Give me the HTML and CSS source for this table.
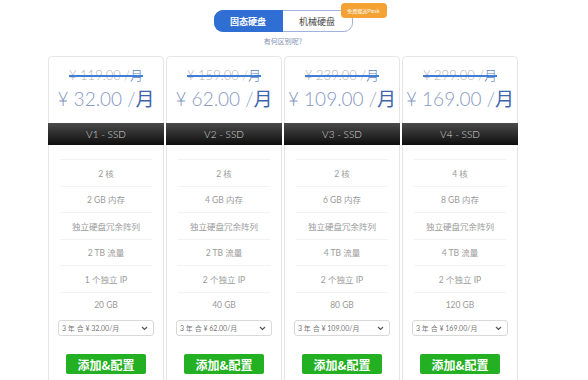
FILE: index.html
```html
<!DOCTYPE html>
<html lang="zh">
<head>
<meta charset="utf-8">
<link rel="stylesheet" href="styles.css">
</head>
<body>
<div class="wrap">
  <div class="toggle-row">
    <div class="toggle">
      <div class="opt active">固态硬盘</div>
      <div class="opt">机械硬盘</div>
      <div class="badge">免费赠送Plesk</div>
    </div>
  </div>
  <div class="sub">有何区别呢?</div>
  <div class="cards">
    <div class="card">
      <div class="prices">
        <div class="old">¥ 119.00 /<span class="m">月</span></div>
        <div class="now">¥ 32.00 /<span class="per">月</span></div>
      </div>
      <div class="bar">V1 - SSD</div>
      <ul class="feats">
        <li>2 核</li><li>2 GB 内存</li><li>独立硬盘冗余阵列</li><li>2 TB 流量</li><li>1 个独立 IP</li><li>20 GB</li>
      </ul>
      <div class="sel"><span>3 年 合 ¥ 32.00/月</span><svg width="7" height="5" viewBox="0 0 7 5"><path d="M1 1l2.5 2.5L6 1" fill="none" stroke="#555" stroke-width="1.2"/></svg></div>
      <div class="btn">添加&amp;配置</div>
    </div>
    <div class="card">
      <div class="prices">
        <div class="old">¥ 159.00 /<span class="m">月</span></div>
        <div class="now">¥ 62.00 /<span class="per">月</span></div>
      </div>
      <div class="bar">V2 - SSD</div>
      <ul class="feats">
        <li>2 核</li><li>4 GB 内存</li><li>独立硬盘冗余阵列</li><li>2 TB 流量</li><li>2 个独立 IP</li><li>40 GB</li>
      </ul>
      <div class="sel"><span>3 年 合 ¥ 62.00/月</span><svg width="7" height="5" viewBox="0 0 7 5"><path d="M1 1l2.5 2.5L6 1" fill="none" stroke="#555" stroke-width="1.2"/></svg></div>
      <div class="btn">添加&amp;配置</div>
    </div>
    <div class="card">
      <div class="prices">
        <div class="old">¥ 239.00 /<span class="m">月</span></div>
        <div class="now">¥ 109.00 /<span class="per">月</span></div>
      </div>
      <div class="bar">V3 - SSD</div>
      <ul class="feats">
        <li>2 核</li><li>6 GB 内存</li><li>独立硬盘冗余阵列</li><li>4 TB 流量</li><li>2 个独立 IP</li><li>80 GB</li>
      </ul>
      <div class="sel"><span>3 年 合 ¥ 109.00/月</span><svg width="7" height="5" viewBox="0 0 7 5"><path d="M1 1l2.5 2.5L6 1" fill="none" stroke="#555" stroke-width="1.2"/></svg></div>
      <div class="btn">添加&amp;配置</div>
    </div>
    <div class="card">
      <div class="prices">
        <div class="old">¥ 299.00 /<span class="m">月</span></div>
        <div class="now">¥ 169.00 /<span class="per">月</span></div>
      </div>
      <div class="bar">V4 - SSD</div>
      <ul class="feats">
        <li>4 核</li><li>8 GB 内存</li><li>独立硬盘冗余阵列</li><li>4 TB 流量</li><li>2 个独立 IP</li><li>120 GB</li>
      </ul>
      <div class="sel"><span>3 年 合 ¥ 169.00/月</span><svg width="7" height="5" viewBox="0 0 7 5"><path d="M1 1l2.5 2.5L6 1" fill="none" stroke="#555" stroke-width="1.2"/></svg></div>
      <div class="btn">添加&amp;配置</div>
    </div>
  </div>
</div>
</body>
</html>
```
FILE: styles.css
```css
* { box-sizing: border-box; }
html, body { margin: 0; padding: 0; background: #fff; overflow: hidden; }
body { font-family: Lato, "Noto Sans CJK SC", sans-serif; color: #999; }
.wrap { width: 470px; margin-left: 48px; padding-top: 10px; }
.toggle-row { display: flex; justify-content: center; }
.toggle { position: relative; display: flex; width: 139px; height: 22px; border: 1px solid #9fb3dc; border-radius: 9px; overflow: visible; }
.opt { flex: 1; display: flex; align-items: center; justify-content: center; font-size: 9px; color: #444; font-family: "Noto Sans CJK SC", sans-serif; }
.opt.active { background: #2f6fd3; color: #fff; border-radius: 9px 0 0 9px; margin: -1px 0 -1px -1px; font-weight: 700; }
.badge { position: absolute; left: 126px; top: -8px; width: 46px; height: 15px; background: #f4a233; border-radius: 4px; color: #fff; font-size: 5px; display: flex; align-items: center; justify-content: center; font-family: "Noto Sans CJK SC", sans-serif; white-space: nowrap; }
.sub { text-align: center; font-size: 7px; color: #7f8fb3; margin-top: 4px; height: 10px; line-height: 10px; font-family: "Noto Sans CJK SC", sans-serif; }
.cards { display: flex; gap: 2px; margin-top: 10px; }
.card { width: 116px; border: 1px solid #e6e6e6; border-radius: 4px 4px 0 0; height: 340px; display: flex; flex-direction: column; align-items: center; }
.prices { height: 66px; width: 100%; display: flex; flex-direction: column; align-items: center; padding-top: 10px; }
.old { font-family: Lato, "Noto Sans CJK SC", sans-serif; font-weight: 300; font-size: 13px; line-height: 17px; color: #b0b0b0; text-decoration: line-through; text-decoration-color: #3f7ed6; text-decoration-thickness: 1.5px; white-space: nowrap; }
.old .m { color: #5b7fbf; }
.now { font-family: Lato, "Noto Sans CJK SC", sans-serif; font-weight: 300; font-size: 19px; line-height: 26px; color: #8799c4; margin-top: 2px; white-space: nowrap; }
.per { color: #3e64ad; font-weight: 400; }
.bar { width: calc(100% + 2px); margin: 0 -1px; height: 22px; background: linear-gradient(#4a4a4a, #0e0e0e); color: #d8d8d8; font-size: 10px; display: flex; align-items: center; justify-content: center; font-weight: 300; }
.feats { list-style: none; margin: 0; padding: 14px 0 0; width: 92px; }
.feats li { height: 26.5px; display: flex; align-items: center; justify-content: center; font-size: 8.5px; color: #9a9a9a; border-top: 1px solid #f3f3f3; font-family: Lato, "Noto Sans CJK SC", sans-serif; }
.sel { margin-top: 2px; width: 96px; height: 16px; border: 1px solid #d9d9d9; border-radius: 3px; display: flex; align-items: center; justify-content: space-between; padding: 0 5px 0 3px; font-size: 7px; color: #777; font-family: Lato, "Noto Sans CJK SC", sans-serif; }
.btn { margin-top: 18px; width: 80px; height: 20px; background: #23b023; border-radius: 2px; color: #fff; font-weight: 700; font-size: 12px; display: flex; align-items: center; justify-content: center; font-family: "Noto Sans CJK SC", sans-serif; }
```
